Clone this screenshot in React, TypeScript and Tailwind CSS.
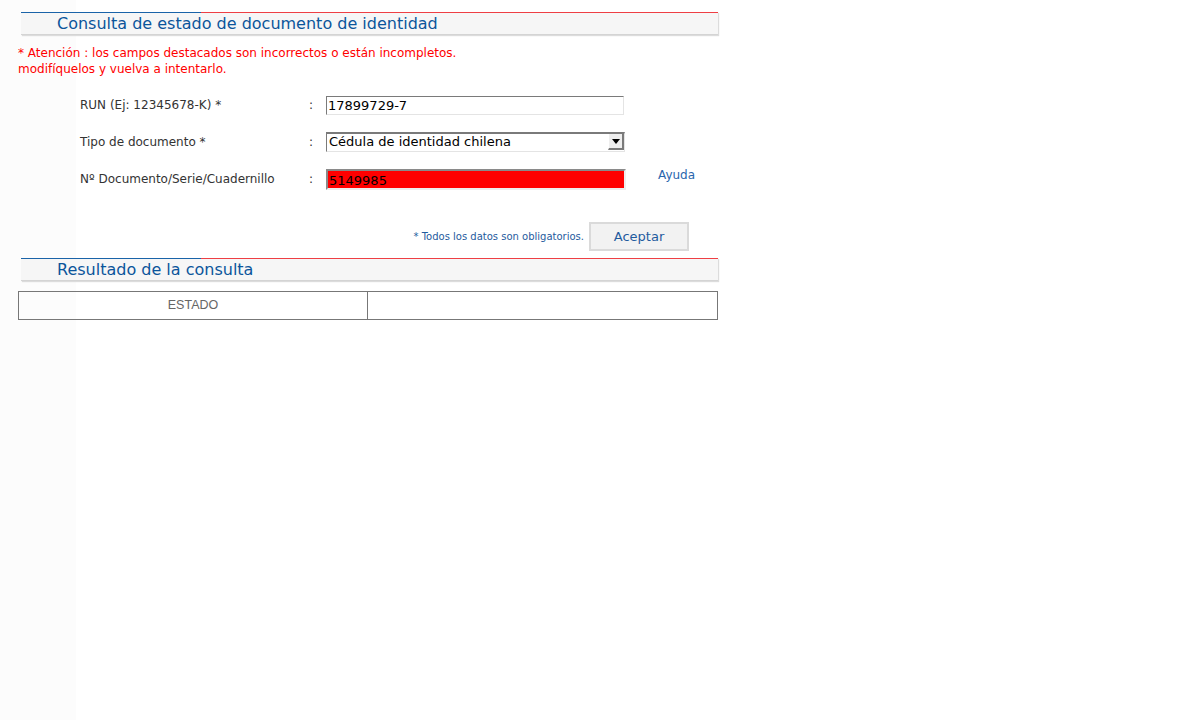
import React from "react";

const Header = ({ title }: { title: string }) => (
  <div className="relative ml-[21px] w-[697px] h-[23px] bg-[#f6f6f6] border-b border-[#d4d4d4] shadow-[1px_1px_1px_#dcdcdc]">
    <div className="flex h-px">
      <div className="w-[180px] bg-[#1a63a8]" />
      <div className="flex-1 bg-[#ee3f44]" />
    </div>
    <h2 className="pl-[36px] text-[16px] leading-[21px] text-[#0b559b] font-['DejaVu_Sans',sans-serif]">{title}</h2>
  </div>
);

const Row = ({ label, children, extra }: { label: string; children: React.ReactNode; extra?: React.ReactNode }) => (
  <div className="flex items-center h-[20px] text-[12px] text-[#333]">
    <div className="w-[229px] pl-[80px] box-content">{label}</div>
    <div className="w-[17px]">:</div>
    {children}
    {extra}
  </div>
);

export default function App() {
  return (
    <div className="min-h-[720px] bg-[linear-gradient(to_right,#fcfcfc_76px,#ffffff_76px)] font-['DejaVu_Sans',sans-serif] pt-[12px]">
      <Header title="Consulta de estado de documento de identidad" />

      <p className="mt-[10px] ml-[18px] text-[12px] leading-[16px] text-[#ff0000]">
        * Atención : los campos destacados son incorrectos o están incompletos.
        <br />
        modifíquelos y vuelva a intentarlo.
      </p>

      <div className="mt-[18px] flex flex-col gap-[17px]">
        <Row label="RUN (Ej: 12345678-K) *">
          <div className="w-[298px] h-[19px] bg-white border border-[#e4e4e4] border-t-[#7a7a7a] border-l-[#7a7a7a] px-[1px] text-[13px] leading-[17px] text-black">
            17899729-7
          </div>
        </Row>
        <Row label="Tipo de documento *">
          <div className="flex w-[299px] h-[20px] bg-white border border-[#e4e4e4] border-t-[#7a7a7a] border-t-2 border-l-[#7a7a7a] text-[13px] leading-[16px] text-black">
            <span className="flex-1 pl-[2px]">Cédula de identidad chilena</span>
            <span className="w-[16px] h-[16px] bg-[#eeeeee] border-r-2 border-b-2 border-[#7a7a7a] border-l border-l-[#ffffff] flex items-center justify-center">
              <svg width="8" height="5" viewBox="0 0 8 5">
                <path d="M0 0h8L4 5z" fill="#000" />
              </svg>
            </span>
          </div>
        </Row>
        <Row
          label="Nº Documento/Serie/Cuadernillo"
          extra={<a className="ml-[32px] -mt-[8px] text-[12px] text-[#2a66ad]">Ayuda</a>}
        >
          <div className="w-[300px] h-[21px] bg-[#ff0000] border-2 border-[#eeeeee] border-t-[#8a8a8a] border-l-[#8a8a8a] pt-[1px] px-[1px] text-[13px] leading-[17px] text-black">
            5149985
          </div>
        </Row>
      </div>

      <div className="mt-[33px] w-[689px] flex justify-end items-center gap-[5px]">
        <span className="text-[10px] text-[#1f5b9e]">* Todos los datos son obligatorios.</span>
        <button className="w-[100px] h-[29px] bg-[#f2f2f2] border-2 border-[#dadada] text-[13px] text-[#1f5b9e]">
          Aceptar
        </button>
      </div>

      <div className="mt-[7px]">
        <Header title="Resultado de la consulta" />
      </div>

      <div className="mt-[10px] ml-[18px] w-[700px] h-[29px] flex border border-[#777]">
        <div className="w-[349px] border-r border-[#777] flex items-center justify-center text-[12.5px] text-[#666] font-['Liberation_Sans',sans-serif]">
          ESTADO
        </div>
        <div className="flex-1" />
      </div>
    </div>
  );
}
